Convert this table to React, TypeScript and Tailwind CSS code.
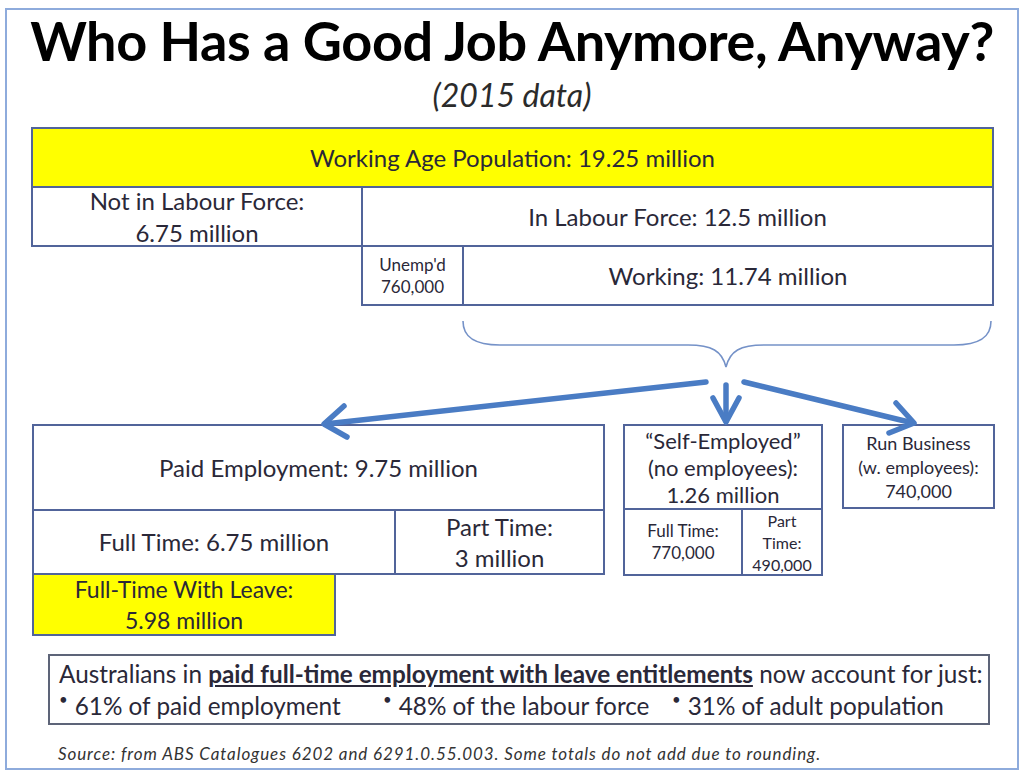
const border = 'border-[#51649a]';

function Cell({ className = '', children }: { className?: string; children: React.ReactNode }) {
  return (
    <div className={`flex flex-col items-center justify-center text-center ${className}`}>
      {children}
    </div>
  );
}

function Bullet() {
  return <span className="text-[15px] leading-none align-super mr-[7px]">•</span>;
}

function Connectors() {
  // brace under "Working" plus the three arrows, drawn in page coordinates
  return (
    <svg
      className="relative z-10 block overflow-visible"
      width={1010}
      height={118}
      viewBox="7 305 1010 118"
    >
      <path
        d="M463,320 C463,336 474,344 500,344 L688,344 C712,344 722,350 726,366 C730,350 740,344 764,344 L954,344 C980,344 991,336 991,320"
        fill="none"
        stroke="#7592c8"
        strokeWidth={1.6}
      />
      <g fill="none" stroke="#4a7cc4" strokeWidth={5.5} strokeLinecap="round" strokeLinejoin="round">
        <path d="M706,381 L325,423" />
        <path d="M344,405 L324,423 L347,436" />
        <path d="M726,384 L726,420" />
        <path d="M713,397 L726,421 L739,397" />
        <path d="M744,381 L913,422" />
        <path d="M896,402 L914,422 L889,432" />
      </g>
    </svg>
  );
}

export default function App() {
  return (
    <div
      className="w-[1024px] h-[774px] bg-white pt-[8px] pl-[5px] text-[#2a2838]"
      style={{ fontFamily: 'Lato, "Open Sans", sans-serif' }}
    >
      <div className="w-[1014px] h-[762px] border-2 border-[#8eabdc] flex flex-col">
        {/* Title */}
        <div className="h-[58px] shrink-0 flex items-end justify-center">
          <h1 className="text-[54px] font-bold leading-none text-black tracking-[-0.4px]">
            Who Has a Good Job Anymore, Anyway?
          </h1>
        </div>
        <div className="h-[43px] shrink-0 flex items-end justify-center">
          <p className="text-[32px] italic leading-none text-[#2b2b2b]">(2015 data)</p>
        </div>

        {/* Top table */}
        <div className="mt-[16px] ml-[24px] w-[963px]">
          <div className={`h-[120px] border-2 ${border} flex flex-col`}>
            <Cell className={`h-[59px] shrink-0 bg-[#ffff00] border-b-2 ${border} text-[24px]`}>
              Working Age Population: 19.25 million
            </Cell>
            <div className="flex-1 min-h-0 flex">
              <Cell className={`w-[330px] border-r-2 ${border} text-[24px] leading-[32px]`}>
                <span>Not in Labour Force:</span>
                <span>6.75 million</span>
              </Cell>
              <Cell className="flex-1 text-[24px]">In Labour Force: 12.5 million</Cell>
            </div>
          </div>
          <div className={`ml-[330px] w-[633px] h-[59px] border-2 border-t-0 ${border} flex`}>
            <Cell className={`w-[101px] border-r-2 ${border} text-[17px] leading-[22px]`}>
              <span>Unemp'd</span>
              <span>760,000</span>
            </Cell>
            <Cell className="flex-1 text-[24px]">Working: 11.74 million</Cell>
          </div>
        </div>

        <Connectors />

        {/* Bottom boxes */}
        <div className="ml-[25px] flex items-start">
          <div className="w-[573px]">
            <div className={`h-[151px] border-2 ${border} flex flex-col`}>
              <Cell className={`h-[85px] shrink-0 border-b-2 ${border} text-[24px]`}>
                Paid Employment: 9.75 million
              </Cell>
              <div className="flex-1 min-h-0 flex">
                <Cell className={`w-[362px] border-r-2 ${border} text-[24px]`}>
                  Full Time: 6.75 million
                </Cell>
                <Cell className="flex-1 text-[24px] leading-[31px]">
                  <span>Part Time:</span>
                  <span>3 million</span>
                </Cell>
              </div>
            </div>
            <Cell className={`w-[304px] h-[61px] bg-[#ffff00] border-2 border-t-0 ${border} text-[23px] leading-[31px]`}>
              <span>Full-Time With Leave:</span>
              <span>5.98 million</span>
            </Cell>
          </div>

          <div className={`ml-[18px] w-[200px] h-[152px] border-2 ${border} flex flex-col`}>
            <Cell className={`h-[84px] shrink-0 border-b-2 ${border} text-[22px] leading-[27px]`}>
              <span>“Self-Employed”</span>
              <span>(no employees):</span>
              <span>1.26 million</span>
            </Cell>
            <div className="flex-1 min-h-0 flex">
              <Cell className={`w-[118px] border-r-2 ${border} text-[17px] leading-[22px]`}>
                <span>Full Time:</span>
                <span>770,000</span>
              </Cell>
              <Cell className="flex-1 text-[16px] leading-[22px] pt-[2px]">
                <span>Part</span>
                <span>Time:</span>
                <span>490,000</span>
              </Cell>
            </div>
          </div>

          <Cell className={`ml-[19px] w-[153px] h-[85px] border-2 ${border} text-[18px] leading-[24px]`}>
            <span>Run Business</span>
            <span>(w. employees):</span>
            <span>740,000</span>
          </Cell>
        </div>

        {/* Summary */}
        <div className="mt-[18px] ml-[41px] w-[942px] h-[71px] border-2 border-[#5d6478] pl-[9px] flex flex-col justify-center text-[24.3px] leading-[32px]">
          <div>
            Australians in{' '}
            <span className="font-bold underline underline-offset-2">
              paid full-time employment with leave entitlements
            </span>{' '}
            now account for just:
          </div>
          <div className="flex">
            <span className="w-[324px]"><Bullet />61% of paid employment</span>
            <span className="w-[289px]"><Bullet />48% of the labour force</span>
            <span><Bullet />31% of adult population</span>
          </div>
        </div>

        <p className="mt-[16px] ml-[51px] text-[17px] italic tracking-[0.9px] text-[#333]">
          Source: from ABS Catalogues 6202 and 6291.0.55.003. Some totals do not add due to rounding.
        </p>
      </div>
    </div>
  );
}
